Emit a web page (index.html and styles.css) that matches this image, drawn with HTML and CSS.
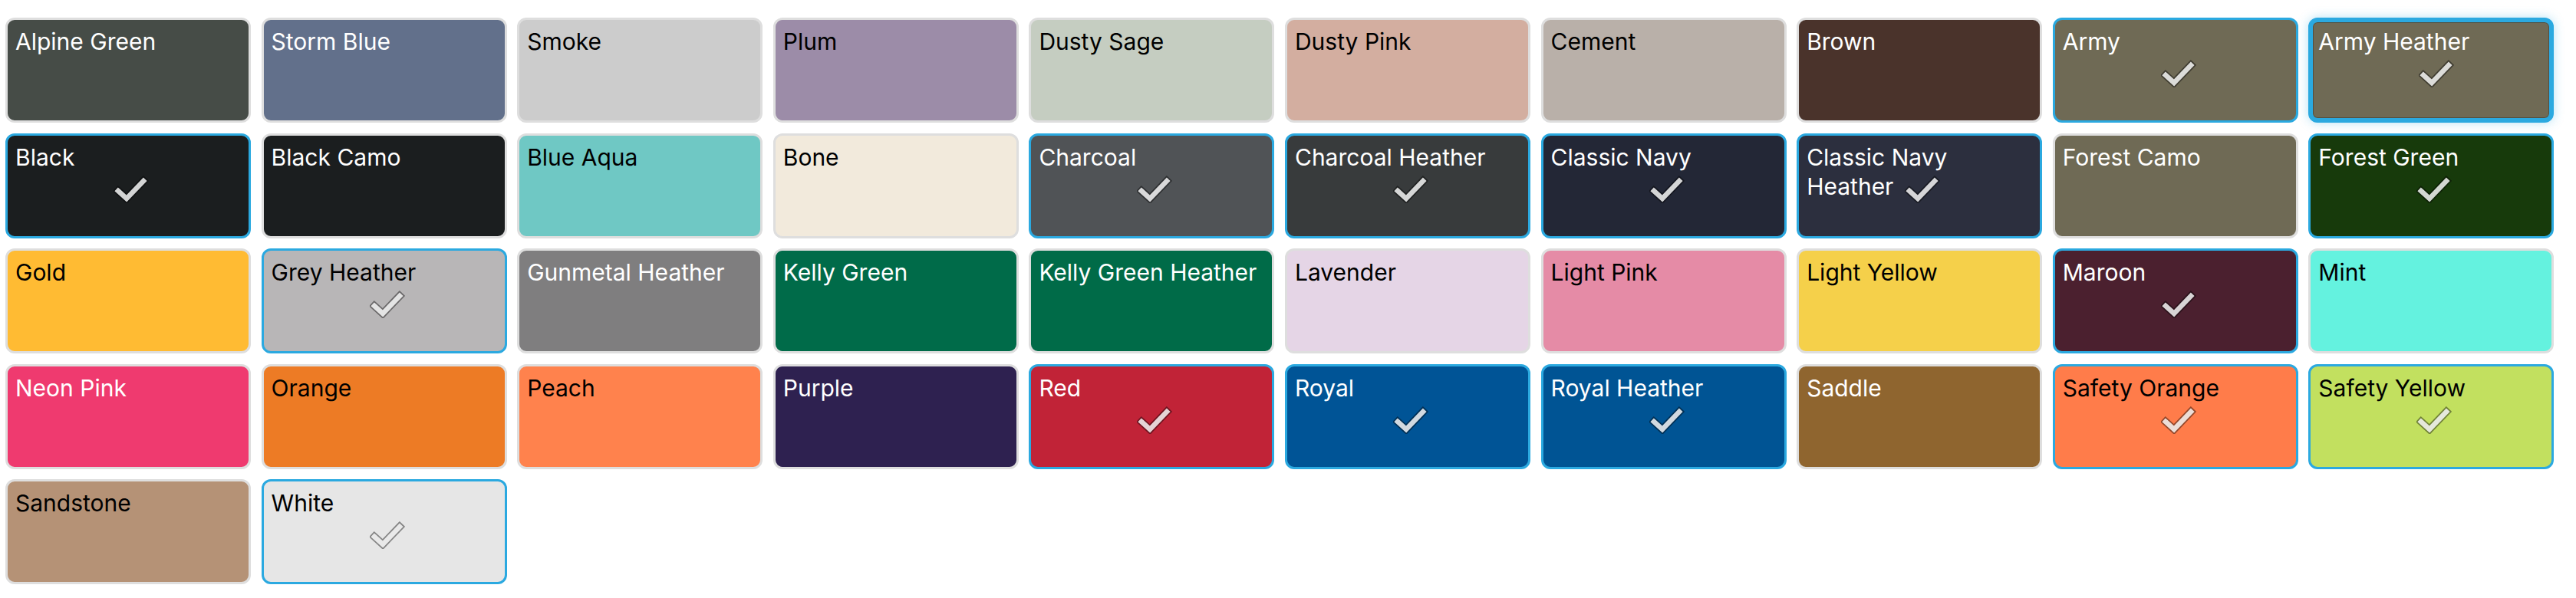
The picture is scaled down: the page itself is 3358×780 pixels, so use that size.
FILE: index.html
```html
<!DOCTYPE html>
<html lang="en">
<head>
<meta charset="utf-8">
<title>Colors</title>
<link rel="stylesheet" href="styles.css">
</head>
<body>
<svg width="0" height="0" class="defs" aria-hidden="true">
  <defs>
    <symbol id="chk" viewBox="0 0 46 36">
      <polyline points="6,20 17,30 39,7" fill="none" stroke="rgba(0,0,0,0.42)" stroke-width="10" stroke-linecap="square" stroke-linejoin="miter"/>
      <polyline points="6,20 17,30 39,7" fill="none" stroke="rgba(255,255,255,0.82)" stroke-width="6.5" stroke-linecap="square" stroke-linejoin="miter"/>
    </symbol>
  </defs>
</svg>
<div class="grid">
  <div class="sw dark" style="background:#464c47"><span class="name">Alpine Green</span></div>
  <div class="sw dark" style="background:#62708b"><span class="name">Storm Blue</span></div>
  <div class="sw light" style="background:#cccccc"><span class="name">Smoke</span></div>
  <div class="sw light" style="background:#9c8ca8"><span class="name">Plum</span></div>
  <div class="sw light" style="background:#c5cdc1"><span class="name">Dusty Sage</span></div>
  <div class="sw light" style="background:#d3aea0"><span class="name">Dusty Pink</span></div>
  <div class="sw light" style="background:#b9b0a9"><span class="name">Cement</span></div>
  <div class="sw dark" style="background:#4a332b"><span class="name">Brown</span></div>
  <div class="sw dark sel" style="background:#6f6a55"><span class="name">Army</span><svg class="check"><use href="#chk"/></svg></div>
  <div class="sw dark sel focus" style="background:#6f6a55"><span class="name">Army Heather</span><svg class="check"><use href="#chk"/></svg></div>

  <div class="sw dark sel" style="background:#1b1e1f"><span class="name">Black</span><svg class="check"><use href="#chk"/></svg></div>
  <div class="sw dark" style="background:#1b1e1f"><span class="name">Black Camo</span></div>
  <div class="sw light" style="background:#6fc8c4"><span class="name">Blue Aqua</span></div>
  <div class="sw light" style="background:#f2eadc"><span class="name">Bone</span></div>
  <div class="sw dark sel" style="background:#505356"><span class="name">Charcoal</span><svg class="check"><use href="#chk"/></svg></div>
  <div class="sw dark sel" style="background:#383b3c"><span class="name">Charcoal Heather</span><svg class="check"><use href="#chk"/></svg></div>
  <div class="sw dark sel" style="background:#232736"><span class="name">Classic Navy</span><svg class="check"><use href="#chk"/></svg></div>
  <div class="sw dark sel" style="background:#2c2f3e"><span class="name">Classic Navy Heather</span><svg class="check"><use href="#chk"/></svg></div>
  <div class="sw dark" style="background:#6f6a55"><span class="name">Forest Camo</span></div>
  <div class="sw dark sel" style="background:#173a0b"><span class="name">Forest Green</span><svg class="check"><use href="#chk"/></svg></div>

  <div class="sw light" style="background:#ffbb33"><span class="name">Gold</span></div>
  <div class="sw light sel" style="background:#b8b6b7"><span class="name">Grey Heather</span><svg class="check"><use href="#chk"/></svg></div>
  <div class="sw dark" style="background:#7f7e7f"><span class="name">Gunmetal Heather</span></div>
  <div class="sw dark" style="background:#006b49"><span class="name">Kelly Green</span></div>
  <div class="sw dark" style="background:#006b48"><span class="name">Kelly Green Heather</span></div>
  <div class="sw light" style="background:#e5d5e6"><span class="name">Lavender</span></div>
  <div class="sw light" style="background:#e58ba6"><span class="name">Light Pink</span></div>
  <div class="sw light" style="background:#f5d04a"><span class="name">Light Yellow</span></div>
  <div class="sw dark sel" style="background:#4b202f"><span class="name">Maroon</span><svg class="check"><use href="#chk"/></svg></div>
  <div class="sw light" style="background:#64f2df"><span class="name">Mint</span></div>

  <div class="sw dark" style="background:#ef3a6f"><span class="name">Neon Pink</span></div>
  <div class="sw light" style="background:#ed7b25"><span class="name">Orange</span></div>
  <div class="sw light" style="background:#ff824d"><span class="name">Peach</span></div>
  <div class="sw dark" style="background:#2e2150"><span class="name">Purple</span></div>
  <div class="sw dark sel" style="background:#c12337"><span class="name">Red</span><svg class="check"><use href="#chk"/></svg></div>
  <div class="sw dark sel" style="background:#005496"><span class="name">Royal</span><svg class="check"><use href="#chk"/></svg></div>
  <div class="sw dark sel" style="background:#005494"><span class="name">Royal Heather</span><svg class="check"><use href="#chk"/></svg></div>
  <div class="sw dark" style="background:#8f652f"><span class="name">Saddle</span></div>
  <div class="sw light sel" style="background:#ff7c4a"><span class="name">Safety Orange</span><svg class="check"><use href="#chk"/></svg></div>
  <div class="sw light sel" style="background:#c2e05f"><span class="name">Safety Yellow</span><svg class="check"><use href="#chk"/></svg></div>

  <div class="sw light" style="background:#b59276"><span class="name">Sandstone</span></div>
  <div class="sw light sel" style="background:#e6e6e6"><span class="name">White</span><svg class="check"><use href="#chk"/></svg></div>
</div>
</body>
</html>
```

FILE: styles.css
```css
html, body {
  margin: 0;
  padding: 0;
  background: #ffffff;
}

body {
  font-family: Inter, "Noto Sans", "Liberation Sans", sans-serif;
}

.defs {
  position: absolute;
  width: 0;
  height: 0;
}

.grid {
  display: grid;
  grid-template-columns: repeat(10, 320px);
  grid-auto-rows: 137px;
  gap: 13.6px;
  padding: 23px 0 0 7px;
}

.sw {
  position: relative;
  box-sizing: border-box;
  border: 3px solid #dedede;
  border-radius: 12px;
  padding: 9px 10px 0 10px;
  font-size: 30px;
  line-height: 38px;
  overflow: hidden;
}

.sw.dark { color: #ffffff; }
.sw.light { color: #000000; }

.sw.sel {
  border-color: #2ba9e0;
}

.sw.focus {
  border-width: 6px;
  padding: 6px 7px 0 7px;
  overflow: visible;
  box-shadow: 0 0 14px rgba(43, 169, 224, 0.35), inset 0 0 0 1px rgba(0, 0, 0, 0.25);
}

.name {
  display: block;
}

.check {
  position: absolute;
  left: 138px;
  top: 52px;
  width: 46px;
  height: 36px;
}

.sw.focus .check {
  left: 138px;
  top: 49px;
}
```
